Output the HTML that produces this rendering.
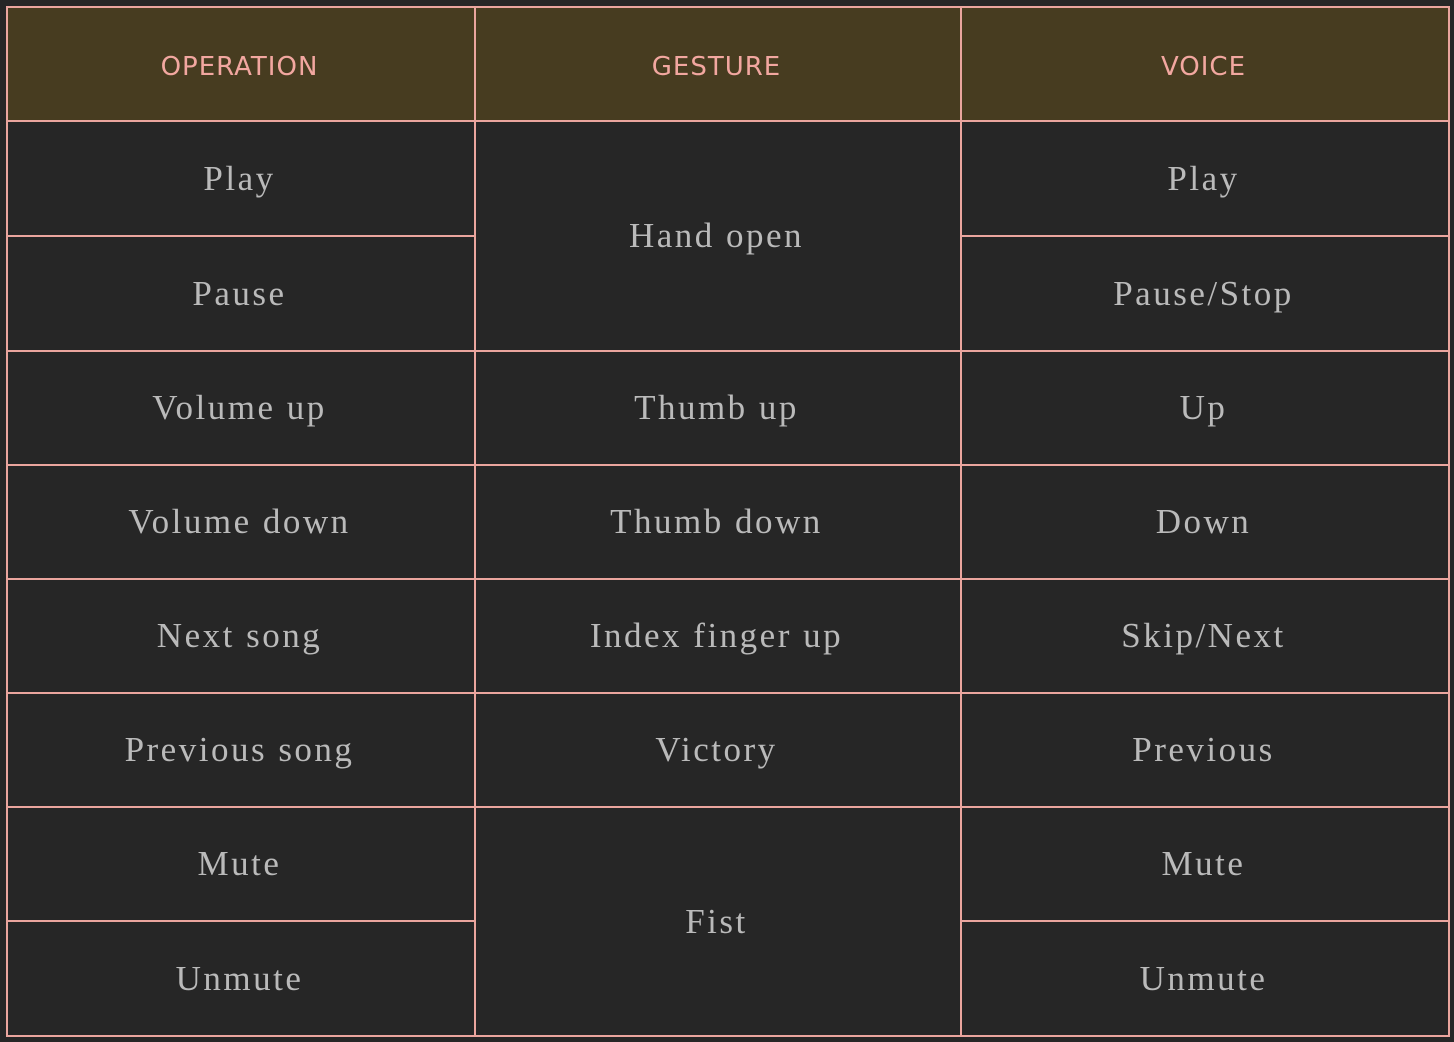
<!DOCTYPE html><html><head><style>
body{margin:0;width:1454px;height:1042px;background:#262626;position:relative;overflow:hidden}
.c{position:absolute;box-sizing:border-box;border:2px solid #eaa59e;display:flex;align-items:center;justify-content:center;font-family:"Liberation Serif",serif;font-size:35px;color:#bababa;letter-spacing:2.5px;background:#262626;padding-right:3px}
.h{background:#473c20;font-family:"DejaVu Sans","Liberation Sans",sans-serif;font-size:26px;color:#f2a7a0;letter-spacing:1px;padding-top:6px}
</style></head><body>
<div class="c h" style="left:6px;top:6px;width:470px;height:116px">OPERATION</div>
<div class="c h" style="left:474px;top:6px;width:488px;height:116px">GESTURE</div>
<div class="c h" style="left:960px;top:6px;width:490px;height:116px">VOICE</div>

<div class="c" style="left:6px;top:120px;width:470px;height:117px">Play</div>
<div class="c" style="left:6px;top:235px;width:470px;height:117px">Pause</div>
<div class="c" style="left:6px;top:350px;width:470px;height:116px">Volume up</div>
<div class="c" style="left:6px;top:464px;width:470px;height:116px">Volume down</div>
<div class="c" style="left:6px;top:578px;width:470px;height:116px">Next song</div>
<div class="c" style="left:6px;top:692px;width:470px;height:116px">Previous song</div>
<div class="c" style="left:6px;top:806px;width:470px;height:116px">Mute</div>
<div class="c" style="left:6px;top:920px;width:470px;height:117px">Unmute</div>

<div class="c" style="left:474px;top:120px;width:488px;height:232px">Hand open</div>
<div class="c" style="left:474px;top:350px;width:488px;height:116px">Thumb up</div>
<div class="c" style="left:474px;top:464px;width:488px;height:116px">Thumb down</div>
<div class="c" style="left:474px;top:578px;width:488px;height:116px">Index finger up</div>
<div class="c" style="left:474px;top:692px;width:488px;height:116px">Victory</div>
<div class="c" style="left:474px;top:806px;width:488px;height:231px">Fist</div>

<div class="c" style="left:960px;top:120px;width:490px;height:117px">Play</div>
<div class="c" style="left:960px;top:235px;width:490px;height:117px">Pause/Stop</div>
<div class="c" style="left:960px;top:350px;width:490px;height:116px">Up</div>
<div class="c" style="left:960px;top:464px;width:490px;height:116px">Down</div>
<div class="c" style="left:960px;top:578px;width:490px;height:116px">Skip/Next</div>
<div class="c" style="left:960px;top:692px;width:490px;height:116px">Previous</div>
<div class="c" style="left:960px;top:806px;width:490px;height:116px">Mute</div>
<div class="c" style="left:960px;top:920px;width:490px;height:117px">Unmute</div>
</body></html>
